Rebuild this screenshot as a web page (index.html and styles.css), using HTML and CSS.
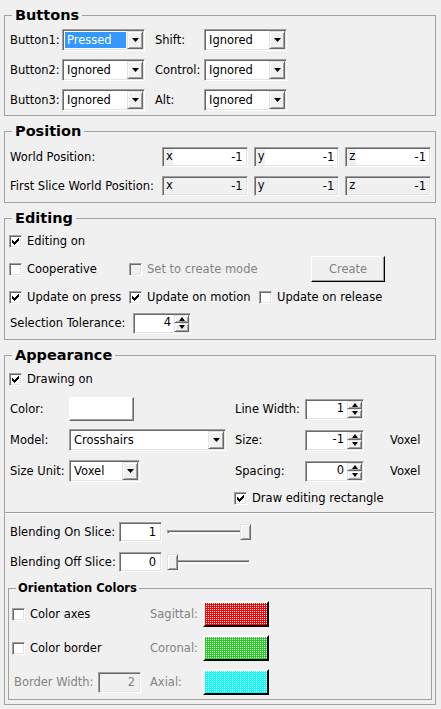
FILE: index.html
```html
<!DOCTYPE html>
<html>
<head>
<meta charset="utf-8">
<link rel="stylesheet" href="styles.css">
</head>
<body>
<fieldset class="group g-buttons">
  <legend>Buttons</legend>
  <div class="btn-grid">
    <span class="lbl">Button1:</span>
    <div class="combo sunken w82"><span class="cv"><span class="sel">Pressed</span></span><span class="drop raised"><svg width="7" height="4" viewBox="0 0 7 4"><path d="M0 0h7L3.5 4z"/></svg></span></div>
    <span class="lbl">Shift:</span>
    <div class="combo sunken w82"><span class="cv"><span class="txt">Ignored</span></span><span class="drop raised"><svg width="7" height="4" viewBox="0 0 7 4"><path d="M0 0h7L3.5 4z"/></svg></span></div>
    <span class="lbl">Button2:</span>
    <div class="combo sunken w82"><span class="cv"><span class="txt">Ignored</span></span><span class="drop raised"><svg width="7" height="4" viewBox="0 0 7 4"><path d="M0 0h7L3.5 4z"/></svg></span></div>
    <span class="lbl">Control:</span>
    <div class="combo sunken w82"><span class="cv"><span class="txt">Ignored</span></span><span class="drop raised"><svg width="7" height="4" viewBox="0 0 7 4"><path d="M0 0h7L3.5 4z"/></svg></span></div>
    <span class="lbl">Button3:</span>
    <div class="combo sunken w82"><span class="cv"><span class="txt">Ignored</span></span><span class="drop raised"><svg width="7" height="4" viewBox="0 0 7 4"><path d="M0 0h7L3.5 4z"/></svg></span></div>
    <span class="lbl">Alt:</span>
    <div class="combo sunken w82"><span class="cv"><span class="txt">Ignored</span></span><span class="drop raised"><svg width="7" height="4" viewBox="0 0 7 4"><path d="M0 0h7L3.5 4z"/></svg></span></div>
  </div>
</fieldset>

<fieldset class="group g-pos">
  <legend>Position</legend>
  <div class="pos-grid">
    <span class="lbl">World Position:</span>
    <div class="pf sunken"><span class="ax">x</span><span class="pv">-1</span></div>
    <div class="pf sunken"><span class="ax">y</span><span class="pv">-1</span></div>
    <div class="pf sunken"><span class="ax">z</span><span class="pv">-1</span></div>
    <span class="lbl">First Slice World Position:</span>
    <div class="pf sunken ro"><span class="ax">x</span><span class="pv">-1</span></div>
    <div class="pf sunken ro"><span class="ax">y</span><span class="pv">-1</span></div>
    <div class="pf sunken ro"><span class="ax">z</span><span class="pv">-1</span></div>
  </div>
</fieldset>

<fieldset class="group g-edit">
  <legend>Editing</legend>
  <div class="erow">
    <label class="chk"><span class="box sunken"><svg width="7" height="7" viewBox="0 0 7 7"><polygon points="0,2 1,2 1,3 2,3 2,4 3,4 3,3 4,3 4,2 5,2 5,1 6,1 6,0 7,0 7,3 6,3 6,4 5,4 5,5 4,5 4,6 3,6 3,7 2,7 2,6 1,6 1,5 0,5"/></svg></span>Editing on</label>
  </div>
  <div class="erow">
    <label class="chk c1"><span class="box sunken"></span>Cooperative</label>
    <label class="chk c2 dis"><span class="box sunken dbox"></span>Set to create mode</label>
    <span class="btn raised">Create</span>
  </div>
  <div class="erow">
    <label class="chk c1"><span class="box sunken"><svg width="7" height="7" viewBox="0 0 7 7"><polygon points="0,2 1,2 1,3 2,3 2,4 3,4 3,3 4,3 4,2 5,2 5,1 6,1 6,0 7,0 7,3 6,3 6,4 5,4 5,5 4,5 4,6 3,6 3,7 2,7 2,6 1,6 1,5 0,5"/></svg></span>Update on press</label>
    <label class="chk c2b"><span class="box sunken"><svg width="7" height="7" viewBox="0 0 7 7"><polygon points="0,2 1,2 1,3 2,3 2,4 3,4 3,3 4,3 4,2 5,2 5,1 6,1 6,0 7,0 7,3 6,3 6,4 5,4 5,5 4,5 4,6 3,6 3,7 2,7 2,6 1,6 1,5 0,5"/></svg></span>Update on motion</label>
    <label class="chk"><span class="box sunken"></span>Update on release</label>
  </div>
  <div class="erow short">
    <span class="lbl tol">Selection Tolerance:</span>
    <div class="spin sunken w58"><span class="sv">4</span><span class="sb"><span class="raised"><i class="up"></i></span><span class="raised"><i class="dn"></i></span></span></div>
  </div>
</fieldset>

<fieldset class="group g-app">
  <legend>Appearance</legend>
  <div class="arow">
    <label class="chk"><span class="box sunken"><svg width="7" height="7" viewBox="0 0 7 7"><polygon points="0,2 1,2 1,3 2,3 2,4 3,4 3,3 4,3 4,2 5,2 5,1 6,1 6,0 7,0 7,3 6,3 6,4 5,4 5,5 4,5 4,6 3,6 3,7 2,7 2,6 1,6 1,5 0,5"/></svg></span>Drawing on</label>
  </div>
  <div class="app-grid">
    <span class="lbl">Color:</span>
    <span class="colorbtn"></span>
    <span class="lbl2">Line Width:</span>
    <div class="spin sunken"><span class="sv">1</span><span class="sb"><span class="raised"><i class="up"></i></span><span class="raised"><i class="dn"></i></span></span></div>
    <span></span><span></span>

    <span class="lbl">Model:</span>
    <div class="combo sunken w157"><span class="cv"><span class="txt">Crosshairs</span></span><span class="drop raised"><svg width="7" height="4" viewBox="0 0 7 4"><path d="M0 0h7L3.5 4z"/></svg></span></div>
    <span class="lbl2">Size:</span>
    <div class="spin sunken"><span class="sv">-1</span><span class="sb"><span class="raised"><i class="up"></i></span><span class="raised"><i class="dn"></i></span></span></div>
    <span></span><span class="unit">Voxel</span>

    <span class="lbl">Size Unit:</span>
    <div class="combo sunken w71"><span class="cv"><span class="txt">Voxel</span></span><span class="drop raised"><svg width="7" height="4" viewBox="0 0 7 4"><path d="M0 0h7L3.5 4z"/></svg></span></div>
    <span class="lbl2">Spacing:</span>
    <div class="spin sunken"><span class="sv">0</span><span class="sb"><span class="raised"><i class="up"></i></span><span class="raised"><i class="dn"></i></span></span></div>
    <span></span><span class="unit">Voxel</span>
  </div>
  <div class="drow">
    <label class="chk"><span class="box sunken"><svg width="7" height="7" viewBox="0 0 7 7"><polygon points="0,2 1,2 1,3 2,3 2,4 3,4 3,3 4,3 4,2 5,2 5,1 6,1 6,0 7,0 7,3 6,3 6,4 5,4 5,5 4,5 4,6 3,6 3,7 2,7 2,6 1,6 1,5 0,5"/></svg></span>Draw editing rectangle</label>
  </div>
  <div class="sep"></div>
  <div class="brow">
    <span class="lbl blbl">Blending On Slice:</span>
    <span class="bfield sunken">1</span>
    <div class="slider"><span class="track"></span><span class="thumb raised" style="left:73px"></span></div>
  </div>
  <div class="brow b2">
    <span class="lbl blbl">Blending Off Slice:</span>
    <span class="bfield sunken">0</span>
    <div class="slider"><span class="track"></span><span class="thumb raised" style="left:0px"></span></div>
  </div>

  <fieldset class="sub">
    <legend>Orientation Colors</legend>
    <div class="ogrid">
      <label class="chk"><span class="box sunken"></span>Color axes</label>
      <span class="dlbl">Sagittal:</span>
      <span class="swatch red"></span>

      <label class="chk"><span class="box sunken"></span>Color border</label>
      <span class="dlbl">Coronal:</span>
      <span class="swatch green"></span>

      <div class="bw"><span class="dlbl bwl">Border Width:</span><span class="bfield sunken dfield">2</span></div>
      <span class="dlbl">Axial:</span>
      <span class="swatch cyan"></span>
    </div>
  </fieldset>
</fieldset>
</body>
</html>
```

FILE: styles.css
```css
* { box-sizing: border-box; }
html { background: #f0f0f0; }
body {
  margin: 0;
  padding: 0 5px 0 4px;
  width: 441px;
  height: 709px;
  overflow: hidden;
  background: #f0f0f0;
  color: #000;
  font-family: "DejaVu Sans", "Liberation Sans", sans-serif;
  font-size: 11.5px;
}

/* ---------- generic 3D borders ---------- */
.sunken {
  border: 1px solid;
  border-color: #a0a0a0 #fff #fff #a0a0a0;
  box-shadow: inset 1px 1px #696969, inset -1px -1px #e3e3e3;
}
.raised {
  border: 1px solid;
  border-color: #e3e3e3 #696969 #696969 #e3e3e3;
  box-shadow: inset 1px 1px #fff, inset -1px -1px #a0a0a0;
  background: #f0f0f0;
}

/* ---------- group boxes ---------- */
.group {
  margin: 6px 0 0;
  padding: 0 4px;
  border: 1px solid #a0a0a0;
  min-width: 0;
}
.group > legend {
  margin-left: 3px;
  padding: 0 3px;
  font-size: 14.5px;
  font-weight: bold;
  line-height: 18px;
}
.lbl { padding-left: 1px; white-space: nowrap; }

/* ---------- combo ---------- */
.combo {
  display: flex;
  height: 22px;
  background: #fff;
}
.w82 { width: 83px; }
.w157 { width: 157px; }
.w71 { width: 71px; }
.combo .cv {
  flex: 1;
  display: flex;
  padding: 2px 1px 2px 2px;
  min-width: 0;
}
.combo .cv > span {
  flex: 1;
  padding-left: 2px;
  line-height: 16px;
  white-space: nowrap;
  overflow: hidden;
}
.combo .cv .sel { background: #3399ff; color: #fff; }
.combo .drop {
  width: 16px;
  margin: 1px 1px 1px 0;
  display: flex;
  align-items: center;
  justify-content: center;
}
.combo .drop svg { display: block; fill: #000; }

/* ---------- Buttons group ---------- */
.g-buttons { padding-top: 5px; padding-bottom: 4px; }
.btn-grid {
  display: grid;
  grid-template-columns: 53px 92px 50px 83px;
  grid-auto-rows: 22px;
  row-gap: 8px;
  align-items: center;
}

/* ---------- Position group ---------- */
.g-pos { padding-top: 7px; padding-bottom: 6px; }
.pos-grid {
  display: grid;
  grid-template-columns: 147px 1fr 1fr 1fr;
  column-gap: 6px;
  grid-auto-rows: 20px;
  row-gap: 9px;
  align-items: center;
}
.pf {
  display: flex;
  height: 20px;
  background: #f0f0f0;
}
.pf .ax { width: 10px; padding-left: 3px; line-height: 16px; }
.pf .pv {
  flex: 1;
  background: #fff;
  text-align: right;
  padding-right: 3px;
  line-height: 16px;
  margin: 1px 1px 1px 0;
}
.pf.ro .pv { background: transparent; }

/* ---------- checkbox ---------- */
.chk {
  display: flex;
  align-items: center;
  gap: 5px;
  white-space: nowrap;
}
.box {
  width: 13px;
  height: 13px;
  flex: none;
  background: #fff;
  display: flex;
  align-items: center;
  justify-content: center;
}
.box svg { display: block; fill: #000; }
.box.dbox { background: #f0f0f0; }
.dis { color: #838383; }

/* ---------- Editing group ---------- */
.g-edit { padding-top: 1px; padding-bottom: 5px; }
.erow {
  display: flex;
  align-items: center;
  height: 26px;
  margin-top: 2px;
}
.erow:first-of-type { margin-top: 0; }
.erow.short { height: 22px; }
.c1 { width: 120px; }
.c2 { width: 182px; }
.c2b { width: 130px; }
.btn {
  width: 74px;
  height: 26px;
  display: flex;
  align-items: center;
  justify-content: center;
  color: #838383;
  border-color: #fff #000 #000 #fff;
  box-shadow: inset -1px -1px #a0a0a0;
}
.tol { width: 124px; }

/* ---------- spin box ---------- */
.spin {
  display: flex;
  height: 21px;
  background: #fff;
  width: 59px;
}
.w58 { width: 58px; }
.spin .sv {
  flex: 1;
  text-align: right;
  padding-right: 3px;
  line-height: 17px;
}
.spin .sb {
  width: 15px;
  display: flex;
  flex-direction: column;
  margin: 1px 1px 1px 0;
}
.spin .sb > span {
  flex: 1;
  display: flex;
  align-items: center;
  justify-content: center;
}
.up, .dn {
  display: block;
  width: 0;
  height: 0;
  border-left: 3.5px solid transparent;
  border-right: 3.5px solid transparent;
}
.up { border-bottom: 4px solid #000; }
.dn { border-top: 4px solid #000; }

/* ---------- Appearance group ---------- */
.g-app { padding-top: 2px; padding-bottom: 4px; }
.arow { display: flex; align-items: center; height: 26px; }
.app-grid {
  display: grid;
  grid-template-columns: 60px 166px 70px 59px 26px auto;
  grid-template-rows: 24px 24px 24px;
  row-gap: 7px;
  margin-top: 5px;
  align-items: center;
}
.lbl2 { white-space: nowrap; }
.colorbtn {
  width: 65px;
  height: 24px;
  background: #fff;
  border: 1px solid;
  border-color: #fff #696969 #696969 #fff;
  box-shadow: inset -1px -1px #a0a0a0;
}
.drow {
  display: flex;
  align-items: center;
  height: 22px;
  margin-top: 4px;
  padding-left: 225px;
}
.sep {
  margin: 3px -3px 0 -4px;
  height: 2px;
  border-top: 1px solid #a0a0a0;
  border-bottom: 1px solid #fff;
}
.brow {
  display: flex;
  align-items: center;
  height: 20px;
  margin-top: 8px;
}
.brow.b2 { margin-top: 10px; }
.blbl { width: 110px; }
.bfield {
  width: 43px;
  height: 20px;
  background: #fff;
  text-align: right;
  padding-right: 5px;
  line-height: 18px;
}
.slider {
  position: relative;
  width: 83px;
  height: 20px;
  margin-left: 5px;
}
.track {
  position: absolute;
  left: 0;
  right: 0;
  top: 8px;
  height: 4px;
  border: 1px solid;
  border-color: #a0a0a0 #fff #fff #a0a0a0;
  box-shadow: inset 1px 1px #696969;
}
.thumb {
  position: absolute;
  top: 2px;
  width: 11px;
  height: 16px;
}

/* ---------- Orientation Colors ---------- */
.sub {
  margin: 9px -1px 0 -1px;
  padding: 6px 4px 4px 3px;
  border: 1px solid #a0a0a0;
  min-width: 0;
}
.sub > legend {
  margin-left: 4px;
  padding: 0 2px;
  font-size: 11.5px;
  font-weight: bold;
  line-height: 14px;
}
.ogrid {
  display: grid;
  grid-template-columns: 138px 53px 66px;
  grid-auto-rows: 26px;
  row-gap: 8px;
  align-items: center;
}
.dlbl { color: #838383; white-space: nowrap; }
.bw { display: flex; align-items: center; }
.bwl { width: 86px; padding-left: 2px; }
.dfield { background: #f0f0f0; color: #838383; height: 21px; }
.swatch {
  height: 26px;
  border: 2px solid;
  border-color: #fff #000 #000 #fff;
  background-image: repeating-conic-gradient(#fff 0 25%, transparent 0 100%);
  background-size: 2px 2px;
}
.red { background-color: #ff0000; }
.green { background-color: #22cc22; }
.cyan { background-color: #00ffff; }
```
